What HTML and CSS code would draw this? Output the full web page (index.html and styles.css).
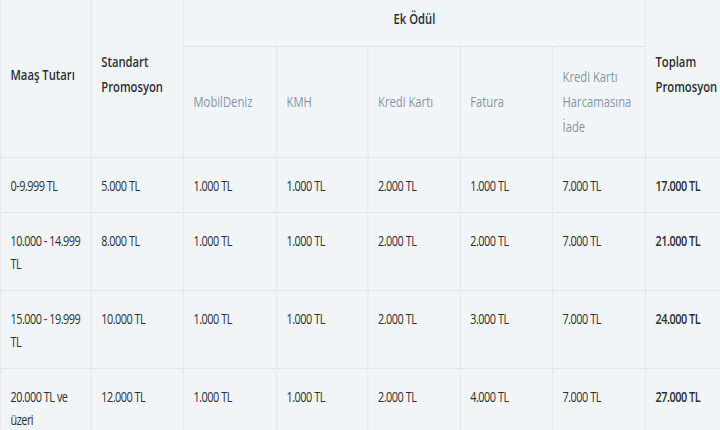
FILE: index.html
```html
<!DOCTYPE html>
<html lang="tr">
<head>
<meta charset="utf-8">
<title>Promosyon Tablosu</title>
<link rel="stylesheet" href="styles.css">
</head>
<body>
<div class="frame">
  <table class="promo">
    <colgroup>
      <col class="c1"><col class="c2"><col class="c3"><col class="c4"><col class="c5"><col class="c6"><col class="c7"><col class="c8">
    </colgroup>
    <thead>
      <tr class="top">
        <th rowspan="2" class="main">Maaş Tutarı</th>
        <th rowspan="2" class="main">Standart<br>Promosyon</th>
        <th colspan="5" class="group">Ek Ödül</th>
        <th rowspan="2" class="main">Toplam<br>Promosyon</th>
      </tr>
      <tr class="sub">
        <th>MobilDeniz</th>
        <th>KMH</th>
        <th>Kredi Kartı</th>
        <th>Fatura</th>
        <th>Kredi Kartı<br>Harcamasına<br>İade</th>
      </tr>
    </thead>
    <tbody>
      <tr>
        <td>0-9.999 TL</td><td>5.000 TL</td><td>1.000 TL</td><td>1.000 TL</td><td>2.000 TL</td><td>1.000 TL</td><td>7.000 TL</td><td class="total">17.000 TL</td>
      </tr>
      <tr>
        <td>10.000 - 14.999<br>TL</td><td>8.000 TL</td><td>1.000 TL</td><td>1.000 TL</td><td>2.000 TL</td><td>2.000 TL</td><td>7.000 TL</td><td class="total">21.000 TL</td>
      </tr>
      <tr>
        <td>15.000 - 19.999<br>TL</td><td>10.000 TL</td><td>1.000 TL</td><td>1.000 TL</td><td>2.000 TL</td><td>3.000 TL</td><td>7.000 TL</td><td class="total">24.000 TL</td>
      </tr>
      <tr>
        <td>20.000 TL ve<br>üzeri</td><td>12.000 TL</td><td>1.000 TL</td><td>1.000 TL</td><td>2.000 TL</td><td>4.000 TL</td><td>7.000 TL</td><td class="total">27.000 TL</td>
      </tr>
    </tbody>
  </table>
</div>
</body>
</html>
```
FILE: styles.css
```css
html, body {
  margin: 0;
  padding: 0;
  overflow: hidden;
  background: #f2f5f8;
}
body {
  width: 720px;
  height: 430px;
  font-family: "Open Sans", "Liberation Sans", sans-serif;
  color: #2b2f33;
}
.frame {
  width: 984px;
  margin-top: -10px;
  transform: scaleX(0.75);
  transform-origin: 0 0;
}
.promo {
  border-collapse: collapse;
  table-layout: fixed;
  width: 984px;
}
.c1 { width: 121px; }
.c2 { width: 123px; }
.c3 { width: 124px; }
.c4 { width: 122px; }
.c5 { width: 123px; }
.c6 { width: 123px; }
.c7 { width: 124px; }
.c8 { width: 124px; }
.promo th, .promo td {
  border: 1px solid #dfe5ea;
  text-align: left;
  white-space: nowrap;
}
.promo th {
  font-size: 15px;
  line-height: 25px;
  padding: 15px 4px 15px 13px;
  vertical-align: middle;
}
.promo th.main {
  font-weight: 600;
  color: #2b2f33;
}
.promo th.group {
  font-weight: 600;
  text-align: center;
  padding-right: 0;
  padding-left: 0;
}
.promo .sub th {
  font-weight: 400;
  color: #8796a3;
  padding-top: 17px;
  padding-bottom: 18px;
}
.promo td {
  font-size: 14.5px;
  line-height: 23px;
  letter-spacing: -0.65px;
  padding: 16px 4px 15px 13px;
  vertical-align: top;
}
.promo td.total {
  font-weight: 600;
}
```
